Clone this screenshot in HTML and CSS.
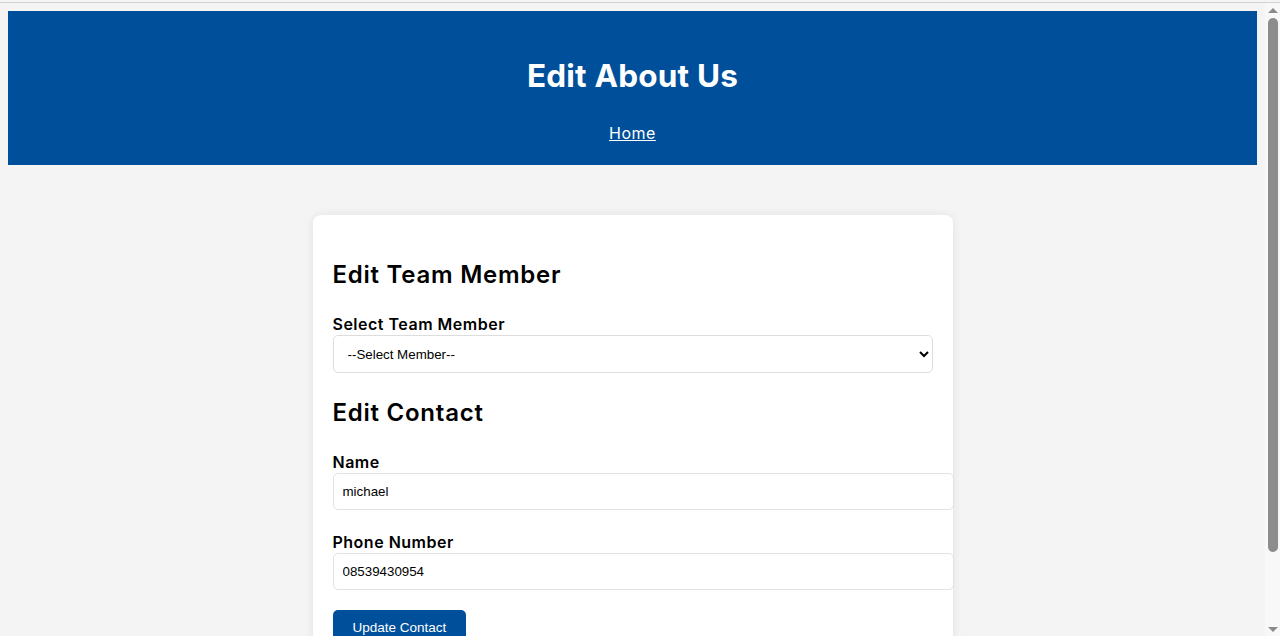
FILE: index.html
```html
<!DOCTYPE html>
<html lang="en">
<head>
<meta charset="utf-8">
<title>Edit About Us</title>
<link rel="stylesheet" href="styles.css">
</head>
<body>
<div class="page">
  <header class="site-header">
    <h1 class="site-title">Edit About Us</h1>
    <nav class="site-nav"><a href="#" class="nav-link">Home</a></nav>
  </header>
  <main class="card">
    <h2 class="section-title">Edit Team Member</h2>
    <form class="form">
      <label class="field-label" for="member">Select Team Member</label>
      <select id="member" class="field-select">
        <option>--Select Member--</option>
      </select>
    </form>
    <h2 class="section-title">Edit Contact</h2>
    <form class="form">
      <label class="field-label" for="name">Name</label>
      <input id="name" class="field-input" type="text" value="michael">
      <label class="field-label" for="phone">Phone Number</label>
      <input id="phone" class="field-input" type="text" value="08539430954">
      <button type="button" class="btn">Update Contact</button>
    </form>
  </main>
</div>
<div class="scrollbar" aria-hidden="true">
  <span class="sb-arrow sb-up"></span>
  <span class="sb-thumb"></span>
  <span class="sb-arrow sb-down"></span>
</div>
</body>
</html>
```
FILE: styles.css
```css
html {
  margin-top: 2px;
  border-top: 1px solid #d6d1cd;
  background: #f4f4f4;
}
body {
  margin: 0;
  display: grid;
  grid-template-columns: 1fr 15px;
  align-items: start;
  background: #f4f4f4;
  font-family: Inter, "Open Sans", sans-serif;
  color: #000;
}
.page {
  padding: 8px;
  min-width: 0;
}
.scrollbar {
  height: 633px;
  background: #f8f8f8;
  display: flex;
  flex-direction: column;
  align-items: center;
  padding: 5px 0 4px;
  box-sizing: border-box;
}
.sb-arrow {
  width: 0;
  height: 0;
  border-left: 5px solid transparent;
  border-right: 5px solid transparent;
}
.sb-up {
  border-bottom: 5px solid #8a8a8a;
}
.sb-down {
  margin-top: auto;
  border-top: 5px solid #8a8a8a;
}
.sb-thumb {
  margin-top: 5px;
  width: 10px;
  height: 534px;
  border-radius: 5px;
  background: #8c8c8c;
}
.site-header {
  background: #004f9a;
  color: #fff;
  text-align: center;
  padding: 20px;
}
.site-title {
  font-size: 31.5px;
  font-weight: 700;
  line-height: 48px;
  margin: 21px 0;
  letter-spacing: 0.2px;
}
.site-nav {
  line-height: 24px;
}
.nav-link {
  color: #fff;
  font-size: 16px;
  letter-spacing: 0.5px;
  text-decoration: underline;
}
.card {
  display: block;
  width: 600px;
  margin: 50px auto;
  padding: 20px;
  background: #fff;
  border-radius: 8px;
  box-shadow: 0 0 10px rgba(0, 0, 0, 0.08);
}
.section-title {
  font-size: 24px;
  font-weight: 600;
  line-height: 36px;
  letter-spacing: 0.75px;
  margin: 20px 0;
  padding-top: 2px;
  height: 34px;
}
.form {
  margin: 0;
}
.field-label {
  display: block;
  font-size: 16px;
  font-weight: 600;
  line-height: 24px;
  letter-spacing: 0.5px;
  padding-top: 1px;
  height: 23px;
}
.field-select {
  display: block;
  width: 600px;
  height: 38px;
  padding: 0 6px 0 10px;
  border: 1px solid #ddd;
  border-radius: 5px;
  background: #fff;
  font-family: "Liberation Sans", Arial, sans-serif;
  font-size: 13.33px;
  color: #000;
}
.field-input {
  display: block;
  width: 600px;
  padding: 10px 10px 10px 9px;
  margin: 0 0 19px;
  border: 1px solid #e2e2e2;
  border-radius: 5px;
  font-family: "Liberation Sans", Arial, sans-serif;
  font-size: 13.33px;
  line-height: 15px;
  color: #000;
}
.btn {
  display: block;
  margin-top: 20px;
  padding: 10px 20px;
  background: #004f9a;
  color: #fff;
  border: none;
  border-radius: 5px;
  font-family: "Liberation Sans", Arial, sans-serif;
  font-size: 13.5px;
  line-height: 16px;
}
```
